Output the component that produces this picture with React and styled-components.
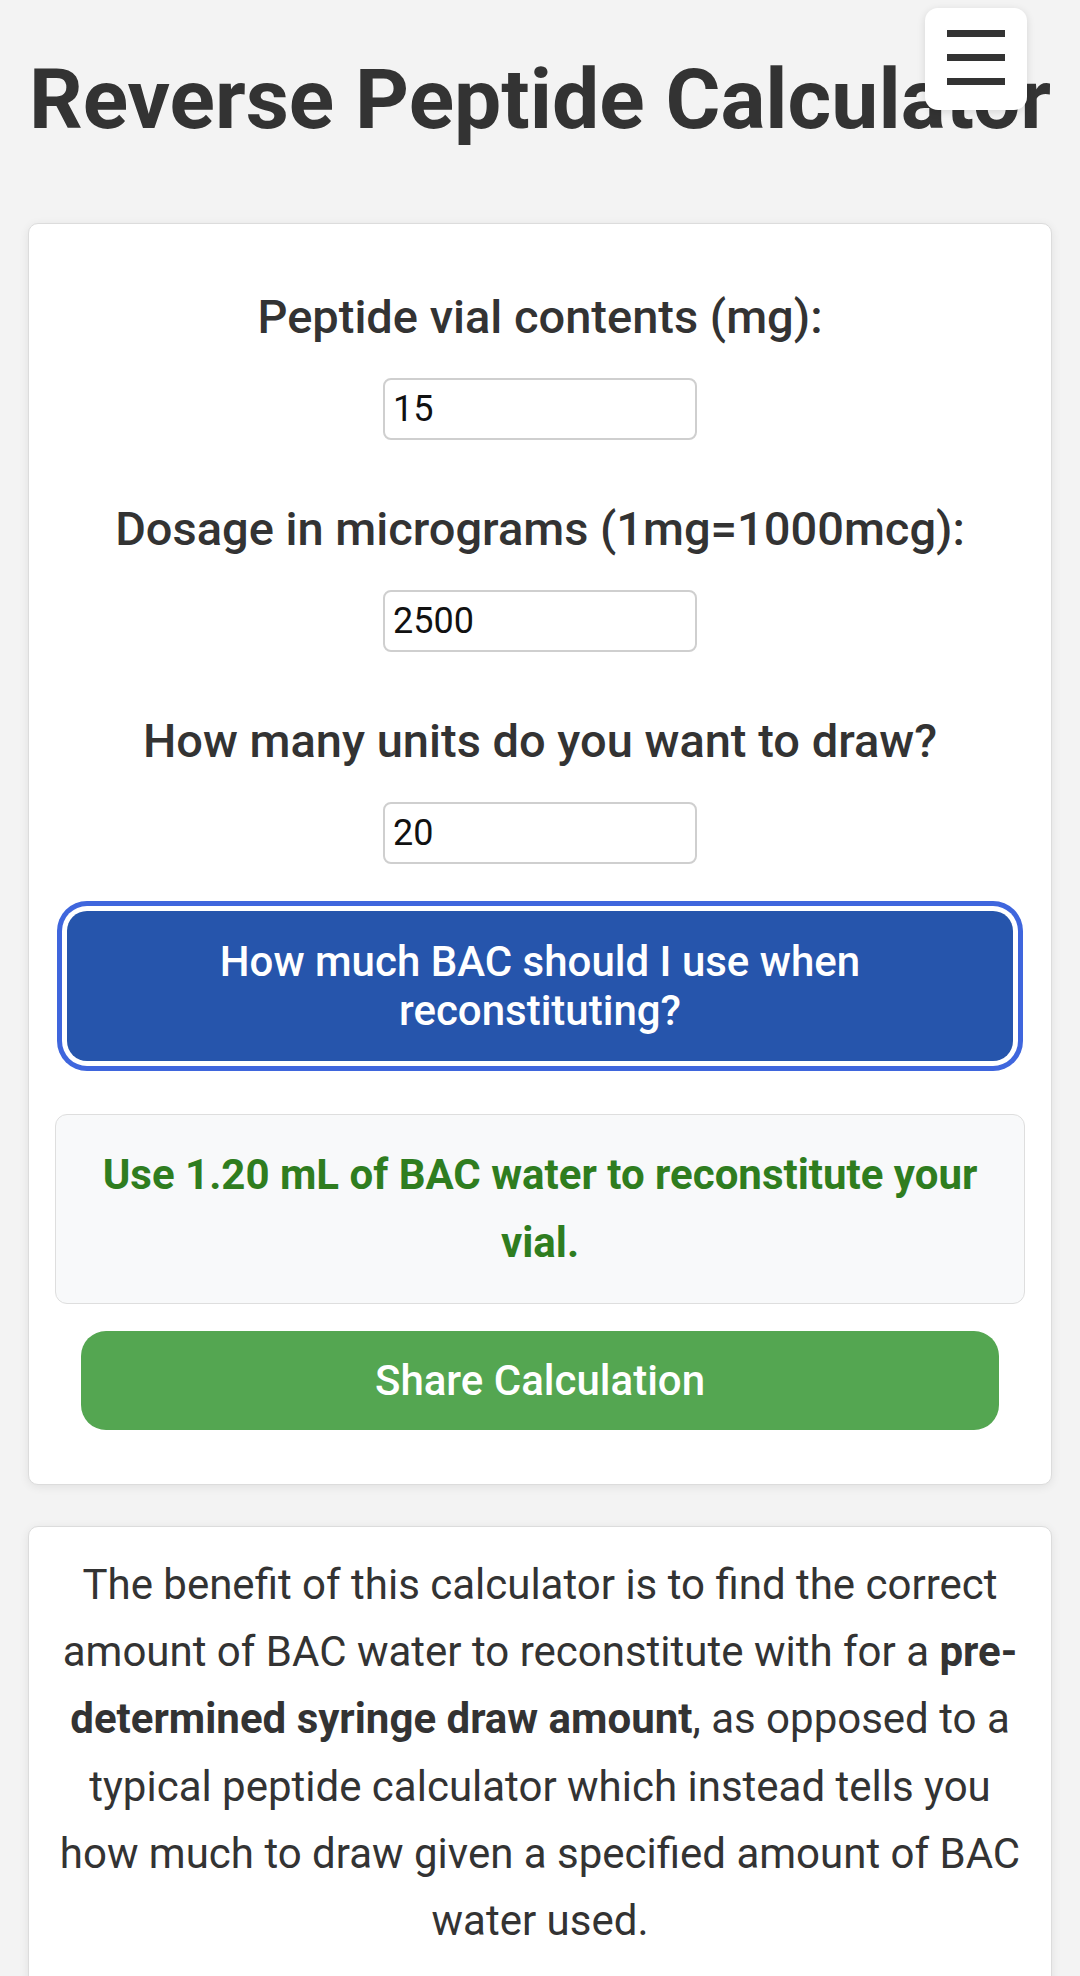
import React from 'react';
import styled, { createGlobalStyle } from 'styled-components';

const GlobalStyle = createGlobalStyle`
  body {
    margin: 0;
    background: #f3f3f3;
    font-family: Roboto, "Noto Sans", Arial, sans-serif;
    color: #333;
  }
`;

const Page = styled.div`
  padding: 0 28px 40px;
`;

const Title = styled.h1`
  margin: 0;
  padding-top: 50px;
  font-size: 84px;
  font-weight: 700;
  line-height: normal;
  text-align: center;
  color: #333;
  white-space: nowrap;
`;

const MenuButton = styled.button`
  position: fixed;
  top: 8px;
  right: 53px;
  width: 102px;
  height: 102px;
  border: none;
  border-radius: 13px;
  background: #fff;
  box-shadow: 0 2px 8px rgba(0, 0, 0, 0.12);
  display: flex;
  flex-direction: column;
  align-items: center;
  justify-content: center;
  gap: 17px;
  padding: 0 0 4px;
`;

const Bar = styled.span`
  display: block;
  width: 58px;
  height: 7px;
  background: #333;
`;

const Card = styled.div`
  margin-top: ${(p) => p.$top}px;
  background: #fff;
  border: 1px solid #dcdcdc;
  border-radius: 10px;
  padding: ${(p) => p.$pad};
  box-shadow: 0 2px 10px rgba(0, 0, 0, 0.08);
`;

const Fields = styled.div`
  display: flex;
  flex-direction: column;
  gap: 62px;
  padding-top: 40px;
`;

const Field = styled.div`
  display: flex;
  flex-direction: column;
  align-items: center;
`;

const Label = styled.label`
  font-size: 47px;
  font-weight: 500;
  line-height: 54px;
  color: #333;
  margin-bottom: 34px;
  text-align: center;
`;

const Input = styled.input`
  box-sizing: border-box;
  width: 314px;
  height: 62px;
  border: 2px solid #cfcfcf;
  border-radius: 8px;
  padding: 0 8px;
  font-family: Roboto, Arial, sans-serif;
  font-size: 36px;
  color: #111;
  background: #fff;
`;

const CalcButton = styled.button`
  display: block;
  box-sizing: border-box;
  width: calc(100% - 24px);
  margin: 47px 12px 0;
  padding: 26px 26px;
  border: none;
  border-radius: 20px;
  background: #2655ac;
  color: #fff;
  font-family: Roboto, Arial, sans-serif;
  font-size: 42px;
  font-weight: 500;
  line-height: 49px;
  box-shadow: 0 0 0 5px #fff, 0 0 0 10px #3f66dd;
`;

const Result = styled.div`
  margin-top: 53px;
  padding: 26px 20px;
  background: #f8f9fa;
  border: 1px solid #dedede;
  border-radius: 12px;
  color: #2f7d1f;
  font-size: 42px;
  font-weight: 700;
  line-height: 68px;
  text-align: center;
`;

const ShareButton = styled.button`
  display: block;
  box-sizing: border-box;
  width: calc(100% - 52px);
  height: 99px;
  margin: 27px 26px 28px;
  border: none;
  border-radius: 25px;
  background: #54a651;
  color: #fff;
  font-family: Roboto, Arial, sans-serif;
  font-size: 42px;
  font-weight: 500;
`;

const Info = styled.p`
  margin: 0;
  font-size: 42px;
  line-height: 1.6;
  text-align: center;
  color: #333;
`;

export default function App() {
  return (
    <>
      <GlobalStyle />
      <MenuButton aria-label="Menu">
        <Bar />
        <Bar />
        <Bar />
      </MenuButton>
      <Page>
        <Title>Reverse Peptide Calculator</Title>
        <Card $top={74} $pad="26px">
          <Fields>
            <Field>
              <Label>Peptide vial contents (mg):</Label>
              <Input defaultValue="15" />
            </Field>
            <Field>
              <Label>Dosage in micrograms (1mg=1000mcg):</Label>
              <Input defaultValue="2500" />
            </Field>
            <Field>
              <Label>How many units do you want to draw?</Label>
              <Input defaultValue="20" />
            </Field>
          </Fields>
          <CalcButton>How much BAC should I use when reconstituting?</CalcButton>
          <Result>Use 1.20 mL of BAC water to reconstitute your vial.</Result>
          <ShareButton>Share Calculation</ShareButton>
        </Card>
        <Card $top={41} $pad="24px 26px 40px">
          <Info>
            The benefit of this calculator is to find the correct amount of BAC water to
            reconstitute with for a <b>pre-determined syringe draw amount</b>, as opposed to a
            typical peptide calculator which instead tells you how much to draw given a
            specified amount of BAC water used.
          </Info>
        </Card>
      </Page>
    </>
  );
}
